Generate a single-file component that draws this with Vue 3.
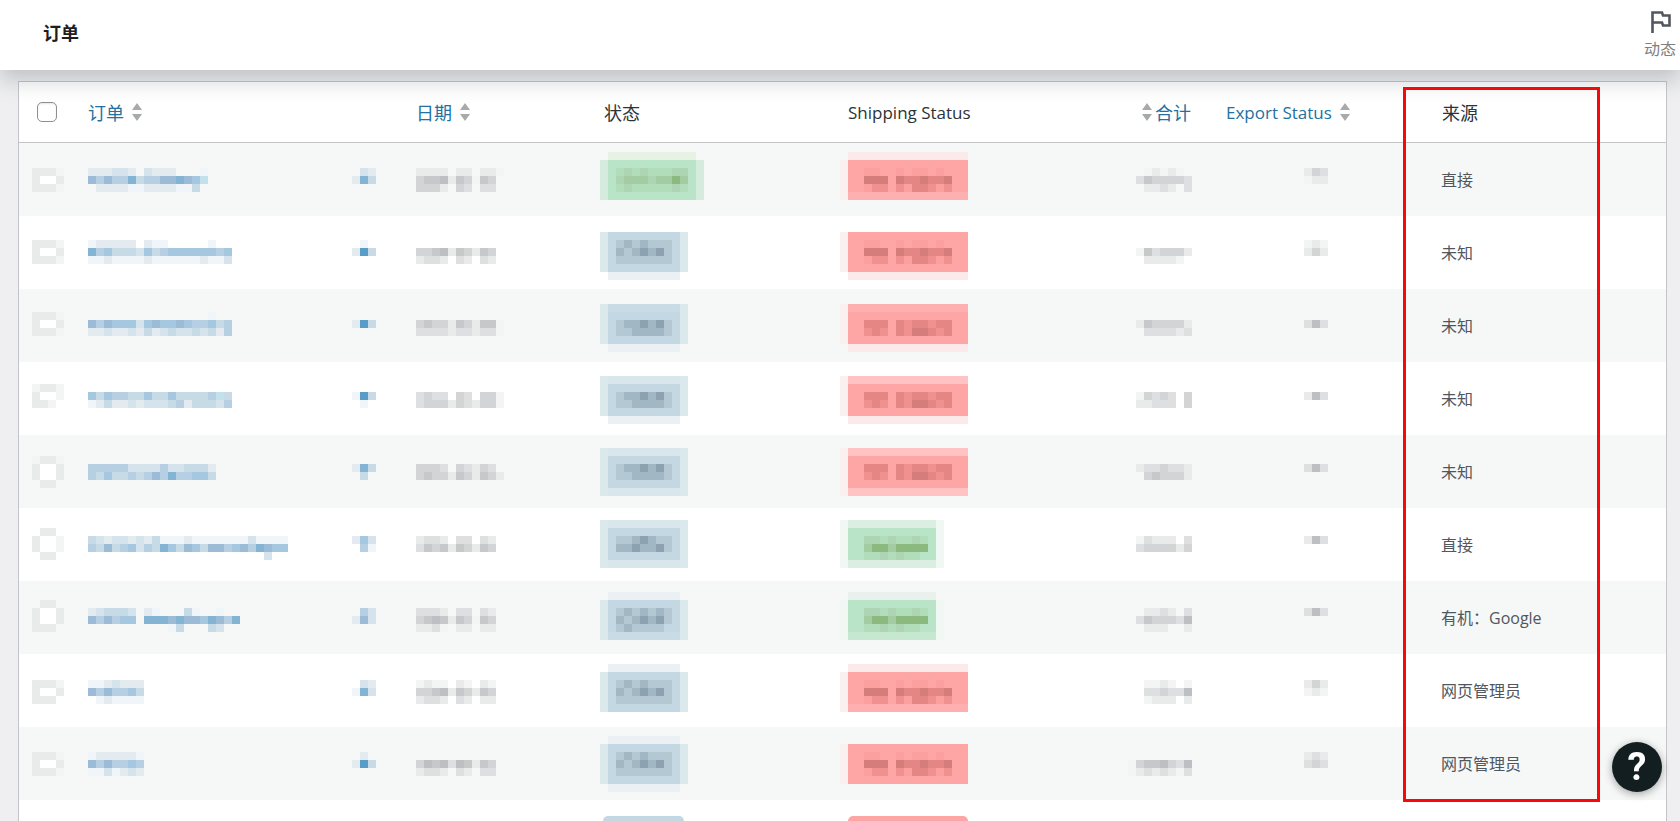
<script setup>
const CELL = 8

const palette = {
  1: '#f0f5f9', 2: '#e3ebf0', 3: '#d5e3ed', 4: '#c7dbe7', 5: '#b6cfe2',
  6: '#a6c7e0', 7: '#9cbbd7', 8: '#84b4d4', 9: '#579dc8', t: '#c3e1eb',
  a: '#f3f4f4', b: '#e9eaea', c: '#dedfe0', d: '#d3d4d5', e: '#c7c8ca', f: '#bdbfc2',
  W: '#ffffff',
  s: '#b4c8d4', u: '#a2b7c4', v: '#8da2b0',
  i: '#b2ddba', j: '#aed5b3', k: '#a3cca2', l: '#8cb97d',
  x: '#f1918f', y: '#e48683', z: '#d57d7b', w: '#fc9f9f',
}

const tones = {
  blue: { F: '#c3d8e3', M: '#c9dce5', P: '#d9e6ec', V: '#ebf0f5', side: '#dce9ec', edge: 'both', cells: 11 },
  lime: { F: '#b9e4c8', M: '#c6e8d0', P: '#daefde', V: '#e7f1e4', side: '#d5ebdd', edge: 'both', cells: 13 },
  green: { F: '#b9e4c8', M: '#c6e8d0', P: '#daefe1', V: '#eaf1ec', side: '#f1f7f3', edge: 'both', cells: 13 },
  red: { F: '#fea5a6', M: '#feb0b0', P: '#ffc3c3', V: '#fce9ea', side: '#fbf0f0', edge: 'left', cells: 16 },
}

const draw = (bands) => {
  const out = []
  for (const [band, text] of Object.entries(bands)) {
    ;[...text].forEach((ch, i) => {
      if (palette[ch]) out.push({ x: i * CELL, y: band * CELL, w: CELL, h: CELL, fill: palette[ch] })
    })
  }
  return out
}

const pill = (kind, edges, bands) => {
  const tone = tones[kind]
  const both = tone.edge === 'both'
  const inner = (tone.cells - (both ? 2 : 1)) * CELL
  const out = []
  ;[...edges].forEach((e, i) => {
    if (!tone[e]) return
    const y = i * CELL
    if (e !== 'V') {
      out.push({ x: 0, y, w: CELL, h: CELL, fill: tone.side })
      if (both) out.push({ x: CELL + inner, y, w: CELL, h: CELL, fill: tone.side })
    }
    out.push({ x: CELL, y, w: inner, h: CELL, fill: tone[e] })
  })
  return out.concat(draw(bands))
}

const blueTall = { 2: '..susussss', 3: '..usuvuvs', 4: '..sssssss' }
blueTall[2] = '..sususss'
const blueShort = { 3: '..suuvuvs', 4: '..ssuuuus' }
const redTall = { 2: '...ww..w.ww.w', 3: '...zzz.yyyzyyz', 4: '...wxx.xwyyxwx' }
redTall[3] = '...zzz.zyyzyyz'
const redShort = { 3: '...yyy.yxyyxyy', 4: '...xyx.yxzzyxy' }
const greenText = { 3: '...jjijiiji', 4: '...kllkllll', 5: '...iijijii' }

const rows = [
  {
    off: 9, source: '直接',
    check: { 2: 'bbba', 3: 'bWWb', 4: 'bbba' },
    order: { 2: '222332.3222...1', 3: '75755845577876t', 4: '.2222112222114' },
    eye: { 2: '.32', 3: '284' },
    date: { 2: '.bbbb.bb.bba', 3: '.deefbedaed', 4: '.dddb.dc.cc' },
    status: pill('lime', 'VFFFFF.', { 2: '..ijijiiijj', 3: '..jkkkjkklk', 4: '..ijiiiiiji' }),
    ship: pill('red', 'VFFFFM.', redTall),
    total: { 2: '..ababa.b', 3: '.ceddddcf', 4: '..bbcb.c' },
    exported: { 2: 'bdc', 3: 'abb' },
  },
  {
    off: 8, source: '未知',
    check: { 2: 'bbba', 3: 'bWWb', 4: 'bbba' },
    order: { 2: '122222.211.....1', 3: '856444364566666656', 4: '112111121111112113' },
    eye: { 2: '.1.', 3: '294' },
    date: { 3: '.ddefbedbed', 4: '.bccb.cb.cb' },
    status: pill('blue', '.FFFFFV', blueTall),
    ship: pill('red', '.FFFFFV', redTall),
    total: { 3: '.aecdddbf', 4: '..bbbba.c' },
    exported: { 2: 'aba', 3: 'bdb' },
  },
  {
    off: 7, source: '未知',
    check: { 2: 'bbba', 3: 'bWWb', 4: 'bbba' },
    order: { 2: '...............1', 3: '757666367667655645', 4: '223223242343343425' },
    eye: { 3: '294' },
    date: { 3: '.deddbedbeea', 4: '.ccccbccbcca' },
    status: pill('blue', '.MFFFFV', blueShort),
    ship: pill('red', '.MFFFFV', redShort),
    total: { 3: '.beddddbf', 4: '..ccccbc' },
    exported: { 3: 'cfc' },
  },
  {
    off: 6, source: '未知',
    check: { 2: 'abba', 3: 'bWWa', 4: 'bba.' },
    order: { 3: '6465544644644445t4', 4: '124223233345244435' },
    eye: { 3: '194', 4: '.1.' },
    date: { 3: '.cdcc.dc.dda', 4: '.cdddbdcbdda' },
    status: pill('blue', '.PFFFFV', blueShort),
    ship: pill('red', '.PFFFFV', redShort),
    total: { 3: '.adcdc.d', 4: '.bbccc.d' },
    exported: { 3: 'bfc' },
  },
  {
    off: 5, source: '未知',
    check: { 2: 'abba', 3: 'bWWb', 4: 'bWWb', 5: '.bb.' },
    order: { 3: '5555533335334442', 4: '5464454575855664' },
    eye: { 3: '284', 4: '.4.' },
    date: { 3: '.dddc.dcbdc', 4: '.deddbedbedb' },
    status: pill('blue', '.PFFFFP', blueShort),
    ship: pill('red', '.PFFFFP', redShort),
    total: { 3: '.bccdccbd', 4: '..dedddbe' },
    exported: { 3: 'cfc' },
  },
  {
    off: 4, source: '直接',
    check: { 2: '.bb.', 3: 'bWWa', 4: 'bWWa', 5: '.bb.' },
    order: { 3: '4323323241112111111131111', 4: '5474563548647647756758766', 5: '......................3' },
    eye: { 3: '263', 4: '.51' },
    date: { 3: '.bccb.cc.cb', 4: '.cedebedbed' },
    status: pill('blue', '.PFFFFP', { 3: '..ssuvuss', 4: '..uuvuuvs' }),
    ship: pill('green', '.PFFFFP', greenText),
    total: { 3: '.acbbb.c', 4: '.cddddbd' },
    exported: { 3: 'bfc' },
  },
  {
    off: 3, source: '有机：Google',
    check: { 2: '.bb.', 3: 'bWWb', 4: 'bWWb', 5: 'bbb.' },
    order: { 3: '234443.21...41..1', 4: '757566.888787768758', 5: '..........14...43' },
    eye: { 3: '.53', 4: '273' },
    date: { 3: '.cccb.cc.cb', 4: '.defebedaed', 5: '.bbca.bb.bb' },
    status: pill('blue', '.VFFFFM', { 3: '..sususus', 4: '..usuvuvs', 5: '..sussss' }),
    ship: pill('green', '.VFFFFM', greenText),
    total: { 3: '..bbcb.c', 4: '.cedddcf', 5: '..bbb..b' },
    exported: { 3: 'cfc' },
  },
  {
    off: 10, source: '网页管理员',
    check: { 2: 'bbba', 3: 'bWWb', 4: 'bbb.' },
    order: { 2: '1123222', 3: '7575564', 4: '.121111' },
    eye: { 2: '.32', 3: '183' },
    date: { 2: '.abaa.ba.ba', 3: '.ddefbedbed', 4: '.bccb.cb.bb' },
    status: pill('blue', 'VFFFFF.', blueTall),
    ship: pill('red', 'VFFFFM.', redTall),
    total: { 2: '..aaba.a', 3: '..ccdccf', 4: '..abbb.b' },
    exported: { 2: 'bdb', 3: 'aba' },
  },
  {
    off: 9, source: '网页管理员',
    check: { 2: 'bbba', 3: 'bWWb', 4: 'bbba' },
    order: { 2: '1222221', 3: '7575565', 4: '1131232' },
    eye: { 2: '.2.', 3: '294' },
    date: { 3: '.dfefcfebed', 4: '.bccb.cb.cc' },
    status: pill('blue', 'VFFFFFV', blueTall),
    ship: pill('red', '.FFFFF.', redTall),
    total: { 3: 'adeefdcf', 4: 'abcbcbac' },
    exported: { 2: 'bcb', 3: 'cdc' },
  },
].map((r) => ({
  off: r.off,
  source: r.source,
  columns: [
    { key: 'check', width: 32, cells: draw(r.check) },
    { key: 'order', width: 200, cells: draw(r.order) },
    { key: 'eye', width: 24, cells: draw(r.eye) },
    { key: 'date', width: 96, cells: draw(r.date) },
    { key: 'status', width: 104, cells: r.status },
    { key: 'ship', width: 128, cells: r.ship },
    { key: 'total', width: 64, cells: draw(r.total) },
    { key: 'exported', width: 24, cells: draw(r.exported) },
  ],
}))
</script>

<template>
  <div class="page">
    <header class="topbar">
      <h1 class="title">订单</h1>
      <button type="button" class="activity">
        <svg class="flag" viewBox="0 0 20 22" width="20" height="22" aria-hidden="true">
          <path d="M1.5 22V1.5H11L12 4.5H18.5V14.5H12L11 11.5H1.5" fill="none" stroke="#50575e" stroke-width="2.6" />
        </svg>
        <span>动态</span>
      </button>
    </header>

    <main class="content">
      <div class="frame">
        <table class="orders">
          <colgroup>
            <col class="w-check" /><col class="w-order" /><col class="w-eye" /><col class="w-date" />
            <col class="w-status" /><col class="w-ship" /><col class="w-total" /><col class="w-export" /><col />
          </colgroup>
          <thead>
            <tr>
              <th class="check"><input type="checkbox" class="tick" aria-label="全选" /></th>
              <th class="order">
                <a href="#" class="sort">订单<svg class="arrows" viewBox="0 0 10 18" width="10" height="18" aria-hidden="true"><path d="M5 0L10 7H0ZM5 18L0 11H10Z" fill="#a7aaad" /></svg></a>
              </th>
              <th></th>
              <th class="date">
                <a href="#" class="sort">日期<svg class="arrows" viewBox="0 0 10 18" width="10" height="18" aria-hidden="true"><path d="M5 0L10 7H0ZM5 18L0 11H10Z" fill="#a7aaad" /></svg></a>
              </th>
              <th class="status">状态</th>
              <th class="ship latin">Shipping Status</th>
              <th class="total">
                <a href="#" class="sort reverse">合计<svg class="arrows" viewBox="0 0 10 18" width="10" height="18" aria-hidden="true"><path d="M5 0L10 7H0ZM5 18L0 11H10Z" fill="#a7aaad" /></svg></a>
              </th>
              <th class="exported latin">
                <a href="#" class="sort">Export Status<svg class="arrows" viewBox="0 0 10 18" width="10" height="18" aria-hidden="true"><path d="M5 0L10 7H0ZM5 18L0 11H10Z" fill="#a7aaad" /></svg></a>
              </th>
              <th class="source">来源</th>
            </tr>
          </thead>
          <tbody>
            <tr v-for="(row, i) in rows" :key="i">
              <td v-for="col in row.columns" :key="col.key" :class="col.key">
                <svg class="mosaic" :width="col.width" height="73" :viewBox="`0 ${-row.off} ${col.width} 73`" shape-rendering="crispEdges" aria-hidden="true">
                  <rect v-for="(c, n) in col.cells" :key="n" :x="c.x" :y="c.y" :width="c.w" :height="c.h" :fill="c.fill" />
                </svg>
              </td>
              <td class="source">{{ row.source }}</td>
            </tr>
            <tr class="partial">
              <td></td><td></td><td></td><td></td>
              <td class="status"><span class="tag blue"></span></td>
              <td class="ship"><span class="tag red"></span></td>
              <td></td><td></td><td></td>
            </tr>
          </tbody>
        </table>
        <div class="highlight"></div>
      </div>
    </main>

    <button type="button" class="help" aria-label="帮助">?</button>
  </div>
</template>

<style>
body {
  margin: 0;
  background: #f0f0f1;
}
</style>

<style scoped>
.page {
  height: 100vh;
  overflow: hidden;
  background: #efeff1;
  color: #50575e;
  font-family: "Open Sans", "Noto Sans CJK SC", sans-serif;
  font-size: 16px;
}
.topbar {
  position: relative;
  z-index: 2;
  display: flex;
  align-items: center;
  justify-content: space-between;
  box-sizing: border-box;
  height: 70px;
  padding: 0 4px 0 43px;
  background: #fff;
  box-shadow: 0 10px 20px rgba(85, 93, 102, 0.3);
}
.title {
  margin: 0 0 4px;
  color: #1e1e1e;
  font-size: 18px;
  line-height: 24px;
  font-weight: 700;
}
.activity {
  display: flex;
  flex-direction: column;
  align-items: center;
  gap: 4px;
  margin-top: 2px;
  padding: 0;
  border: 0;
  background: none;
  color: #808080;
  font: inherit;
  line-height: 24px;
}
.flag {
  display: block;
  margin-left: 2px;
}
.content {
  padding: 11px 13px 0 18px;
}
.frame {
  position: relative;
  border: 1px solid #c3c4c7;
  background: #fff;
}
.orders {
  width: 100%;
  table-layout: fixed;
  border-collapse: separate;
  border-spacing: 0;
}
.w-check { width: 69px; }
.w-order { width: 264px; }
.w-eye { width: 64px; }
.w-date { width: 184px; }
.w-status { width: 240px; }
.w-ship { width: 288px; }
.w-total { width: 90px; }
.w-export { width: 222px; }

th {
  height: 58px;
  padding: 2px 0 0;
  border-bottom: 1px solid #c3c4c7;
  color: #2c3338;
  font-size: 18px;
  font-weight: 400;
  line-height: 24px;
  text-align: left;
  white-space: nowrap;
}
th.latin { font-size: 17px; }
th.check {
  padding-top: 0;
  padding-left: 18px;
}
th.status { padding-left: 4px; }
th.ship { padding-left: 8px; }
th.total { padding-left: 14px; }
th.exported { padding-left: 8px; }
th.source { padding-left: 2px; }

.tick {
  display: block;
  width: 20px;
  height: 20px;
  margin: 0;
  appearance: none;
  border: 1px solid #8c8f94;
  border-radius: 5px;
  background: #fff;
  box-shadow: inset 0 1px 2px rgba(0, 0, 0, 0.1);
}
.sort {
  display: inline-flex;
  align-items: center;
  gap: 8px;
  color: #2271a1;
  text-decoration: none;
}
.sort.reverse {
  flex-direction: row-reverse;
  gap: 3px;
}
.arrows {
  margin-bottom: 2px;
}
td {
  height: 73px;
  padding: 0;
  vertical-align: top;
}
tbody tr:nth-child(odd) td {
  background: #f6f8f7;
}
td.check { padding-left: 13px; }
td.date .mosaic { margin-left: -8px; }
td.exported { padding-left: 86px; }
td.source {
  padding-left: 1px;
  vertical-align: middle;
  line-height: 24px;
}
.mosaic {
  display: block;
}
tbody tr.partial td {
  padding-top: 16px;
  height: 58px;
  background: #fff;
}
.tag {
  display: block;
  height: 40px;
  border-radius: 5px;
}
.tag.blue {
  width: 81px;
  margin-left: 3px;
  background: #c3d8e3;
}
.tag.red {
  width: 120px;
  margin-left: 8px;
  background: #fea5a6;
}
.highlight {
  position: absolute;
  top: 5px;
  left: 1384px;
  box-sizing: border-box;
  width: 197px;
  height: 715px;
  border: 3px solid #fa0808;
  pointer-events: none;
}
.help {
  position: fixed;
  right: 18px;
  bottom: 29px;
  width: 50px;
  height: 50px;
  padding: 0;
  border: 0;
  border-radius: 50%;
  background: #131e20;
  box-shadow: 0 2px 8px rgba(0, 0, 0, 0.35);
  color: #fff;
  font: 700 38px/50px Roboto, sans-serif;
  text-align: center;
}
</style>
